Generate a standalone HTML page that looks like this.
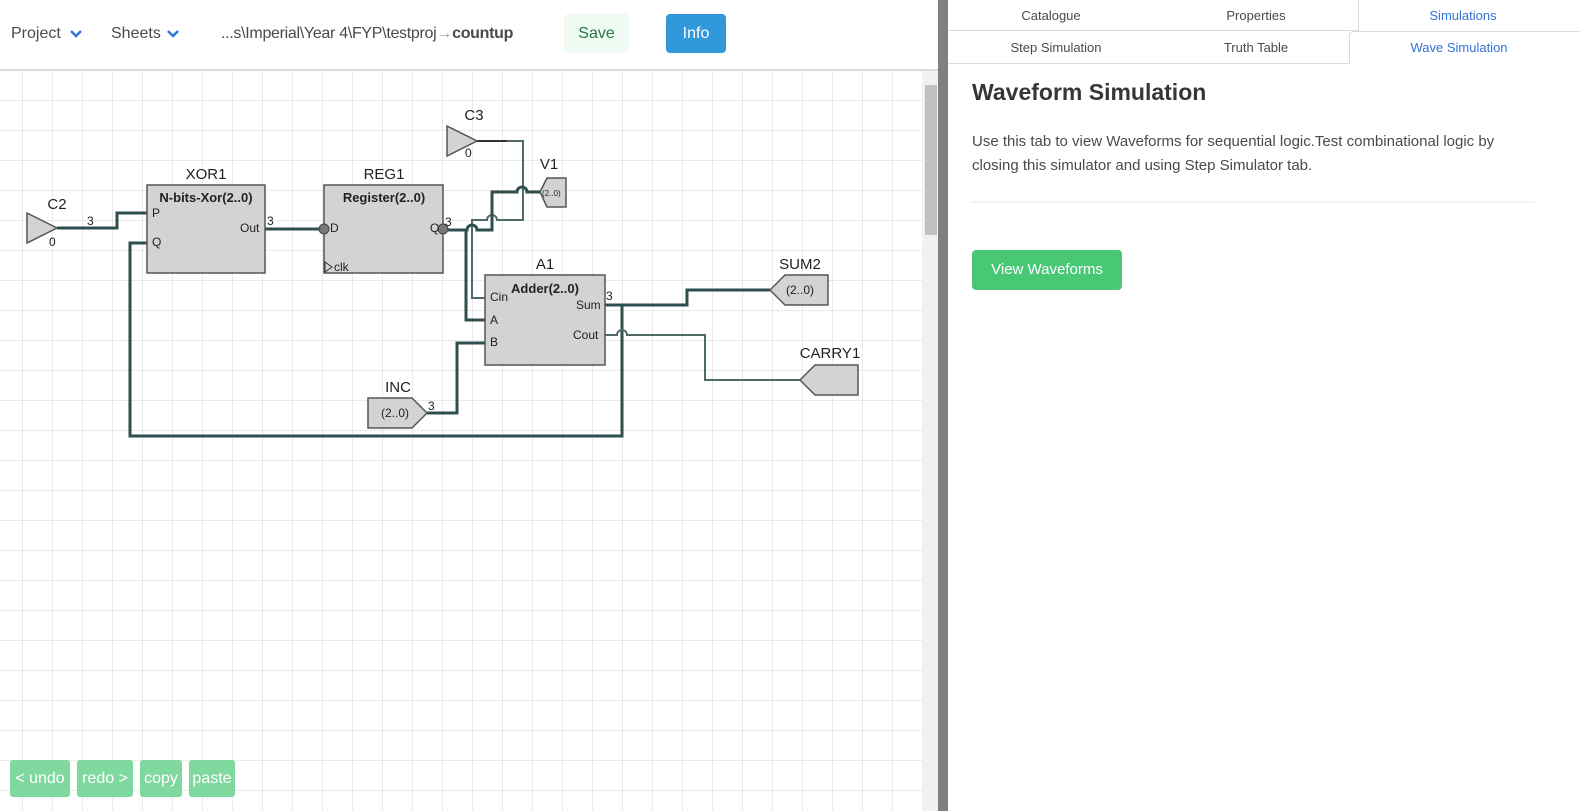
<!DOCTYPE html>
<html><head><meta charset="utf-8"><style>
body{margin:0;width:1580px;height:811px;overflow:hidden;font-family:"Liberation Sans",sans-serif;background:#fff;position:relative}
.a{position:absolute}
.hdr{left:0;top:0;width:940px;height:69px;border-bottom:2px solid #dbdbdb;background:#fff;font-size:16px;color:#4a4a4a}
.hdr span{position:absolute;top:25px}
.btn{position:absolute;border-radius:4px;text-align:center;font-size:16px}
.tab{position:absolute;font-size:13px;color:#4a4a4a;text-align:center}
.ub{position:absolute;top:760px;height:37px;background:#7fd89e;color:#fff;font-size:16px;line-height:37px;text-align:center;border-radius:3px}
</style></head><body>
<svg class="a" style="left:0;top:71px" width="922" height="740" viewBox="0 71 922 740">
<defs><pattern id="g" x="22" y="10" width="30" height="30" patternUnits="userSpaceOnUse"><path d="M0 0H30M0 0V30" stroke="#d6d6d6" stroke-width="1" fill="none"/></pattern></defs>
<rect x="0" y="71" width="922" height="740" fill="url(#g)"/>
<g fill="none" stroke-linejoin="miter">
<path d="M57 228H117V213H147" stroke="#2f4f4f" stroke-width="3"/>
<path d="M265 229H323" stroke="#2f4f4f" stroke-width="3"/>
<path d="M477 141H507" stroke="#333" stroke-width="2"/>
<path d="M507 141H523V220H497a5 5 0 0 0 -10 0H472V298H485" stroke="#4f6b68" stroke-width="2"/>
<path d="M443 230H467a5 5 0 0 1 10 0H492V192H517a5 5 0 0 1 10 0H540" stroke="#2f4f4f" stroke-width="3"/>
<path d="M466 230V320H485" stroke="#2f4f4f" stroke-width="3"/>
<path d="M427 413H457V343H485" stroke="#2f4f4f" stroke-width="3"/>
<path d="M605 305H687V290H770" stroke="#2f4f4f" stroke-width="3"/>
<path d="M622 305V436H130V243H147" stroke="#2f4f4f" stroke-width="3"/>
<path d="M605 335H617a5 5 0 0 1 10 0H705V380H800" stroke="#4f6b68" stroke-width="2"/>
</g>
<g stroke="#555" stroke-width="1.5" fill="#d3d3d3">
<path d="M27 213L57 228L27 243Z"/>
<path d="M447 126L477 141L447 156Z"/>
<rect x="147" y="185" width="118" height="88"/>
<rect x="324" y="185" width="119" height="88"/>
<rect x="485" y="275" width="120" height="90"/>
<path d="M540 192L547 178H566V207H547Z"/>
<path d="M368 398H412L427 413L412 428H368Z"/>
<path d="M770 290L785 275H828V305H785Z"/>
<path d="M800 380L815 365H858V395H815Z"/>
</g>
<circle cx="324" cy="229" r="5" fill="#777" stroke="#444"/>
<circle cx="443" cy="229" r="5" fill="#777" stroke="#444"/>
<path d="M325 262L332 267L325 272Z" fill="none" stroke="#333"/>
<g font-family="Liberation Sans,sans-serif" fill="#222">
<g font-size="15" text-anchor="middle">
<text x="57" y="209">C2</text><text x="474" y="120">C3</text><text x="206" y="179">XOR1</text><text x="384" y="179">REG1</text>
<text x="549" y="169">V1</text><text x="545" y="269">A1</text><text x="398" y="392">INC</text><text x="800" y="269">SUM2</text><text x="830" y="358">CARRY1</text>
</g>
<g font-size="13" font-weight="bold" text-anchor="middle">
<text x="206" y="202">N-bits-Xor(2..0)</text><text x="384" y="202">Register(2..0)</text><text x="545" y="293">Adder(2..0)</text>
</g>
<g font-size="12">
<text x="49" y="246">0</text><text x="465" y="157">0</text><text x="87" y="225">3</text><text x="267" y="225">3</text><text x="445" y="226">3</text><text x="606" y="300">3</text><text x="428" y="410">3</text>
<text x="152" y="217">P</text><text x="152" y="246">Q</text><text x="240" y="232">Out</text><text x="330" y="232">D</text><text x="334" y="271">clk</text><text x="430" y="232">Q</text>
<text x="490" y="301">Cin</text><text x="490" y="324">A</text><text x="490" y="346">B</text><text x="576" y="309">Sum</text><text x="573" y="339">Cout</text>
<text x="381" y="417">(2..0)</text><text x="786" y="294">(2..0)</text>
</g>
<text x="542" y="196" font-size="8">(2..0)</text>
</g>
</svg>
<div class="a hdr">
<span style="left:11px">Project</span>
<svg class="a" style="left:69px;top:29px" width="14" height="10"><path d="M2 2L7 7L12 2" fill="none" stroke="#3273dc" stroke-width="2.5"/></svg>
<span style="left:111px">Sheets</span>
<svg class="a" style="left:166px;top:29px" width="14" height="10"><path d="M2 2L7 7L12 2" fill="none" stroke="#3273dc" stroke-width="2.5"/></svg>
<span style="left:221px;font-size:16px;letter-spacing:-0.3px">...s\Imperial\Year 4\FYP\testproj<span style="position:static;color:#999">&rarr;</span><b>countup</b></span>
<div class="btn" style="left:564px;top:14px;width:65px;height:39px;line-height:39px;background:#effaf3;color:#257942">Save</div>
<div class="btn" style="left:666px;top:14px;width:60px;height:39px;line-height:39px;background:#3298dc;color:#fff">Info</div>
</div>
<div class="a" style="left:922px;top:71px;width:16px;height:740px;background:#f1f1f1"></div>
<div class="a" style="left:925px;top:85px;width:12px;height:150px;background:#c1c1c1"></div>
<div class="a" style="left:938px;top:0;width:10px;height:811px;background:#808080"></div>
<div class="ub" style="left:10px;width:60px">&lt; undo</div>
<div class="ub" style="left:77px;width:56px">redo &gt;</div>
<div class="ub" style="left:140px;width:42px">copy</div>
<div class="ub" style="left:189px;width:46px">paste</div>
<div class="a" style="left:948px;top:0;width:632px;height:811px">
<div class="a" style="left:0;top:30px;width:632px;border-top:1px solid #dbdbdb"></div>
<div class="a" style="left:0;top:63px;width:632px;border-top:1px solid #dbdbdb"></div>
<div class="a" style="left:410px;top:0;width:222px;height:31px;background:#fff;border-left:1px solid #dbdbdb"></div>
<div class="a" style="left:401px;top:31px;width:231px;height:33px;background:#fff;border:1px solid #dbdbdb;border-bottom:none;border-radius:4px 4px 0 0"></div>
<div class="tab" style="left:0;top:8px;width:206px">Catalogue</div>
<div class="tab" style="left:206px;top:8px;width:204px">Properties</div>
<div class="tab" style="left:410px;top:8px;width:210px;color:#3273dc">Simulations</div>
<div class="tab" style="left:0;top:40px;width:216px">Step Simulation</div>
<div class="tab" style="left:210px;top:40px;width:196px">Truth Table</div>
<div class="tab" style="left:401px;top:40px;width:220px;color:#3273dc">Wave Simulation</div>
<div class="a" style="left:24px;top:79px;font-size:23px;font-weight:bold;color:#363636">Waveform Simulation</div>
<div class="a" style="left:24px;top:130px;width:560px;font-size:15px;line-height:24px;color:#4a4a4a">Use this tab to view Waveforms for sequential logic.Test combinational logic by closing this simulator and using Step Simulator tab.</div>
<div class="a" style="left:24px;top:201px;width:563px;border-top:2px solid #f2f2f2"></div>
<div class="btn" style="left:24px;top:250px;width:150px;height:40px;line-height:40px;background:#48c774;color:#fff;font-size:15px">View Waveforms</div>
</div>
</body></html>
